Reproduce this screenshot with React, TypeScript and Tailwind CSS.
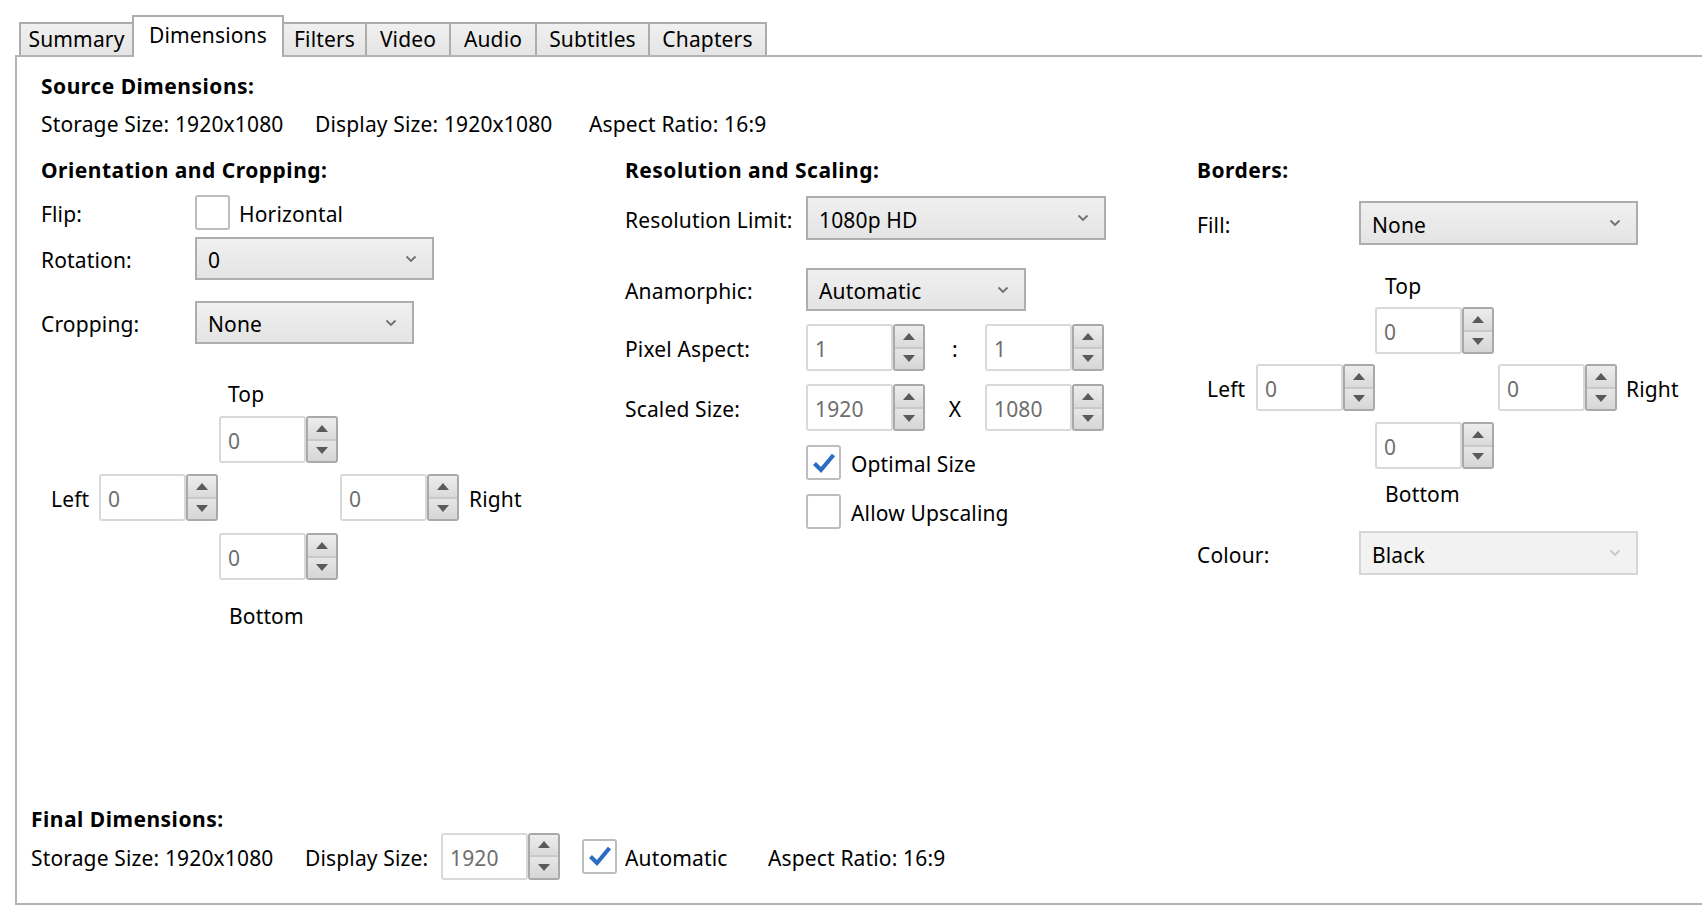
import React from "react";

function T({ children, className = "" }: { children: React.ReactNode; className?: string }) {
  return <span className={"relative top-[2px] " + className}>{children}</span>;
}

function Chevron({ disabled = false }: { disabled?: boolean }) {
  return (
    <svg width="12" height="8" viewBox="0 0 12 8" className="shrink-0">
      <path
        d="M1.5 1.5 L6 6 L10.5 1.5"
        fill="none"
        stroke={disabled ? "#c8c8c8" : "#707070"}
        strokeWidth="1.8"
      />
    </svg>
  );
}

function Dropdown({
  value,
  width,
  height = "h-[44px]",
  disabled = false,
}: {
  value: string;
  width: string;
  height?: string;
  disabled?: boolean;
}) {
  return (
    <div
      className={
        width +
        " " +
        height +
        " flex items-center justify-between pl-[11px] pr-[15px] border-2 " +
        (disabled
          ? "border-[#d6d6d6] bg-[#f2f2f2]"
          : "border-[#adadad] bg-gradient-to-b from-[#f0f0f0] to-[#e4e4e4]")
      }
    >
      <T>{value}</T>
      <Chevron disabled={disabled} />
    </div>
  );
}

function Tri({ up }: { up: boolean }) {
  return (
    <svg width="12" height="7" viewBox="0 0 12 7">
      <path d={up ? "M0 7 L6 0 L12 7 Z" : "M0 0 L12 0 L6 7 Z"} fill="#5a5a5a" />
    </svg>
  );
}

function Spin({ value, inputW = "w-[87px]" }: { value: string; inputW?: string }) {
  return (
    <div className="flex h-[47px] shrink-0">
      <div
        className={
          inputW +
          " h-full flex items-center pl-[7px] bg-white border-2 border-[#d9d9d9] rounded-[3px] text-[#6e6e6e]"
        }
      >
        <T>{value}</T>
      </div>
      <div className="w-[32px] h-full flex flex-col rounded-[3px] border-2 border-[#a9a9a9] overflow-hidden">
        <div className="flex-1 flex items-center justify-center bg-gradient-to-b from-[#ededed] to-[#dadada] border-b-2 border-[#c9c9c9]">
          <Tri up />
        </div>
        <div className="flex-1 flex items-center justify-center bg-gradient-to-b from-[#e6e6e6] to-[#d6d6d6]">
          <Tri up={false} />
        </div>
      </div>
    </div>
  );
}

function Checkbox({ checked = false }: { checked?: boolean }) {
  return (
    <div className="w-[35px] h-[35px] shrink-0 border-2 border-[#bdbdbd] rounded-[3px] bg-white flex items-center justify-center">
      {checked && (
        <svg width="24" height="22" viewBox="0 0 24 22">
          <path d="M2.5 11.5 L9 18 L21.5 3" fill="none" stroke="#2b6cc4" strokeWidth="4.2" />
        </svg>
      )}
    </div>
  );
}

function Tab({ label, width, active = false, first = false }: { label: string; width: string; active?: boolean; first?: boolean }) {
  return (
    <div
      className={
        width +
        " flex items-center justify-center border-2 border-b-0 border-[#acacac] " +
        (first ? "" : "-ml-[2px] ") +
        (active
          ? "h-[42px] bg-white relative z-10 -mb-[2px] pb-[4px]"
          : "h-[33px] bg-gradient-to-b from-[#f0f0f0] to-[#e5e5e5]")
      }
    >
      {label}
    </div>
  );
}

const H = "h-[27px] flex items-center font-bold tracking-[0.5px]";

export default function App() {
  return (
    <div className="w-[1702px] h-[912px] bg-white overflow-hidden text-[21px] leading-none tracking-[0.15px] text-black font-['Noto_Sans','Open_Sans',sans-serif]">
      {/* Tabs */}
      <div className="flex items-end h-[55px] pl-[19px]">
        <Tab label="Summary" width="w-[115px]" first />
        <Tab label="Dimensions" width="w-[152px]" active />
        <Tab label="Filters" width="w-[85px]" />
        <Tab label="Video" width="w-[86px]" />
        <Tab label="Audio" width="w-[88px]" />
        <Tab label="Subtitles" width="w-[115px]" />
        <Tab label="Chapters" width="w-[119px]" />
      </div>

      {/* Panel */}
      <div className="ml-[15px] w-[1720px] h-[850px] border-2 border-[#b4b4b4] flex flex-col">
        {/* Source dimensions */}
        <div className="pl-[24px]">
          <div className={"mt-[14px] " + H}>
            <T>Source Dimensions:</T>
          </div>
          <div className="mt-[10px] h-[28px] flex items-center">
            <T className="w-[274px]">Storage Size: 1920x1080</T>
            <T className="w-[274px]">Display Size: 1920x1080</T>
            <T>Aspect Ratio: 16:9</T>
          </div>

          {/* Columns */}
          <div className="mt-[19px] flex">
            {/* Left column */}
            <div className="w-[584px] flex flex-col">
              <div className={H}>
                <T>Orientation and Cropping:</T>
              </div>
              <div className="mt-[13px] h-[35px] flex items-center">
                <T className="w-[154px]">Flip:</T>
                <Checkbox />
                <T className="ml-[9px]">Horizontal</T>
              </div>
              <div className="mt-[7px] h-[43px] flex items-center">
                <T className="w-[154px]">Rotation:</T>
                <Dropdown value="0" width="w-[239px]" height="h-[43px]" />
              </div>
              <div className="mt-[21px] h-[43px] flex items-center">
                <T className="w-[154px]">Cropping:</T>
                <Dropdown value="None" width="w-[219px]" height="h-[43px]" />
              </div>
              <div className="mt-[35px] h-[27px] flex items-center pl-[187px]">
                <T>Top</T>
              </div>
              <div className="mt-[10px] pl-[178px] flex">
                <Spin value="0" />
              </div>
              <div className="mt-[11px] h-[47px] flex items-center pl-[10px]">
                <T className="w-[48px]">Left</T>
                <Spin value="0" />
                <div className="w-[122px]" />
                <Spin value="0" />
                <T className="ml-[10px]">Right</T>
              </div>
              <div className="mt-[12px] pl-[178px] flex">
                <Spin value="0" />
              </div>
              <div className="mt-[21px] h-[27px] flex items-center pl-[188px]">
                <T>Bottom</T>
              </div>
            </div>

            {/* Middle column */}
            <div className="w-[572px] flex flex-col">
              <div className={H}>
                <T>Resolution and Scaling:</T>
              </div>
              <div className="mt-[14px] h-[44px] flex items-center">
                <T className="w-[181px]">Resolution Limit:</T>
                <Dropdown value="1080p HD" width="w-[300px]" />
              </div>
              <div className="mt-[28px] h-[43px] flex items-center">
                <T className="w-[181px]">Anamorphic:</T>
                <Dropdown value="Automatic" width="w-[220px]" height="h-[43px]" />
              </div>
              <div className="mt-[13px] h-[47px] flex items-center">
                <T className="w-[181px]">Pixel Aspect:</T>
                <Spin value="1" />
                <T className="w-[60px] text-center">:</T>
                <Spin value="1" />
              </div>
              <div className="mt-[13px] h-[47px] flex items-center">
                <T className="w-[181px]">Scaled Size:</T>
                <Spin value="1920" />
                <T className="w-[60px] text-center">X</T>
                <Spin value="1080" />
              </div>
              <div className="mt-[14px] h-[35px] flex items-center pl-[181px]">
                <Checkbox checked />
                <T className="ml-[10px]">Optimal Size</T>
              </div>
              <div className="mt-[14px] h-[35px] flex items-center pl-[181px]">
                <Checkbox />
                <T className="ml-[10px]">Allow Upscaling</T>
              </div>
            </div>

            {/* Right column */}
            <div className="w-[520px] flex flex-col">
              <div className={H}>
                <T>Borders:</T>
              </div>
              <div className="mt-[19px] h-[44px] flex items-center">
                <T className="w-[162px]">Fill:</T>
                <Dropdown value="None" width="w-[279px]" />
              </div>
              <div className="mt-[26px] h-[27px] flex items-center pl-[188px]">
                <T>Top</T>
              </div>
              <div className="mt-[9px] pl-[178px] flex">
                <Spin value="0" />
              </div>
              <div className="mt-[10px] h-[47px] flex items-center pl-[10px]">
                <T className="w-[49px]">Left</T>
                <Spin value="0" />
                <div className="w-[123px]" />
                <Spin value="0" />
                <T className="ml-[9px]">Right</T>
              </div>
              <div className="mt-[11px] pl-[178px] flex">
                <Spin value="0" />
              </div>
              <div className="mt-[10px] h-[27px] flex items-center pl-[188px]">
                <T>Bottom</T>
              </div>
              <div className="mt-[25px] h-[44px] flex items-center">
                <T className="w-[162px]">Colour:</T>
                <Dropdown value="Black" width="w-[279px]" disabled />
              </div>
            </div>
          </div>
        </div>

        {/* Final dimensions */}
        <div className="mt-auto pl-[14px] pb-[23px]">
          <div className="h-[28px] flex items-center font-bold tracking-[0.5px]">
            <T>Final Dimensions:</T>
          </div>
          <div className="mt-[1px] h-[48px] flex items-center">
            <T className="w-[274px]">Storage Size: 1920x1080</T>
            <T className="w-[136px]">Display Size:</T>
            <Spin value="1920" />
            <div className="ml-[22px]">
              <Checkbox checked />
            </div>
            <T className="ml-[8px] w-[143px]">Automatic</T>
            <T>Aspect Ratio: 16:9</T>
          </div>
        </div>
      </div>
    </div>
  );
}
